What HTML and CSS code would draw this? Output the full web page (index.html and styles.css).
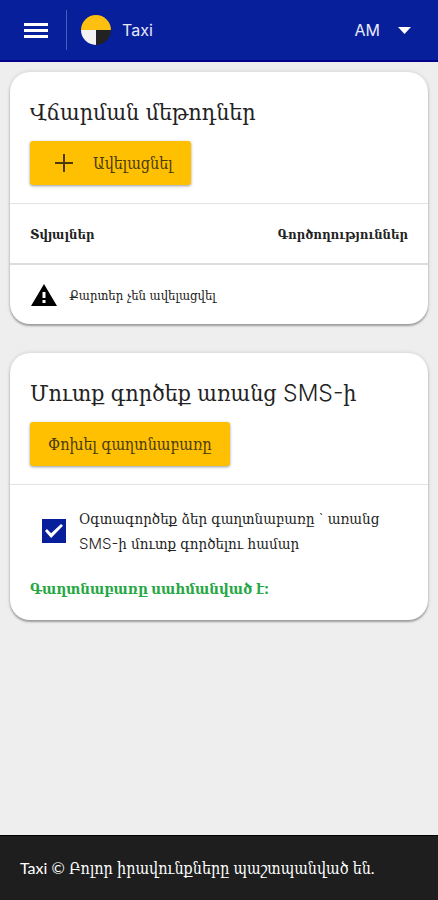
FILE: index.html
```html
<!DOCTYPE html>
<html lang="hy">
<head>
<meta charset="utf-8">
<meta name="viewport" content="width=device-width, initial-scale=1">
<title>Taxi</title>
<link rel="stylesheet" href="styles.css">
</head>
<body>
<header class="topbar">
  <button class="menu" type="button" aria-label="Մենյու">
    <svg width="24" height="18" viewBox="0 0 24 18"><path d="M0 1h24v3H0zM0 7h24v3H0zM0 13h24v3H0z" fill="#fff"/></svg>
  </button>
  <a class="brand" href="#">
    <svg width="30" height="30" viewBox="0 0 30 30"><path d="M0 15a15 15 0 0 1 30 0z" fill="#fdc010"/><path d="M0 15h15v15A15 15 0 0 1 0 15z" fill="#f3f3f3"/><path d="M15 15h15a15 15 0 0 1-15 15z" fill="#222"/></svg>
    <span>Taxi</span>
  </a>
  <button class="language" type="button">
    <span>AM</span>
    <svg width="13" height="7" viewBox="0 0 13 7"><path d="M0 0h13L6.500 7z" fill="#fff"/></svg>
  </button>
</header>
<main class="content">
  <section class="card">
    <div class="card-head">
      <h2>Վճարման մեթոդներ</h2>
      <button class="action action-add" type="button">
        <svg width="18" height="18" viewBox="0 0 18 18"><path d="M8 0h2v8h8v2h-8v8H8v-8H0V8h8z" fill="#4a3b0c"/></svg>
        <span>Ավելացնել</span>
      </button>
    </div>
    <table class="methods">
      <thead>
        <tr><th>Տվյալներ</th><th>Գործողություններ</th></tr>
      </thead>
      <tbody>
        <tr><td colspan="2">
          <div class="empty">
            <svg width="26" height="22" viewBox="0 0 26 22"><path fill-rule="evenodd" d="M13 0l13 22H0zM11.500 8v6h3V8zM11.500 16v3h3v-3z" fill="#000"/></svg>
            <span>Քարտեր չեն ավելացվել</span>
          </div>
        </td></tr>
      </tbody>
    </table>
  </section>
  <section class="card">
    <div class="card-head">
      <h2>Մուտք գործեք առանց SMS-ի</h2>
      <button class="action" type="button">Փոխել գաղտնաբառը</button>
    </div>
    <div class="password">
      <label class="option">
        <input type="checkbox" checked>
        <span>Օգտագործեք ձեր գաղտնաբառը ` առանց SMS-ի մուտք գործելու համար</span>
      </label>
      <p class="status">Գաղտնաբառը սահմանված է:</p>
    </div>
  </section>
</main>
<footer class="footer">Taxi © Բոլոր իրավունքները պաշտպանված են.</footer>
</body>
</html>
```
FILE: styles.css
```css
* { box-sizing: border-box; }
body {
  margin: 0;
  min-height: 100vh;
  display: flex;
  flex-direction: column;
  background: #eee;
  color: #222;
  font-family: Inter, "DejaVu Serif Condensed", "DejaVu Serif", serif;
  font-size: 13px;
  line-height: 20px;
}
button { font: inherit; border: 0; cursor: pointer; }
svg { display: block; flex: none; }
.topbar {
  display: flex;
  align-items: center;
  height: 62px;
  padding: 0 19px 0 16px;
  background: #081f9b;
  border-bottom: 2px solid #00008b;
  color: #e6e9f8;
  font-size: 16px;
}
.menu {
  padding: 12px 18px 10px 8px;
  border-right: 1px solid #4b5cb6;
  background: none;
}
.brand {
  display: flex;
  align-items: center;
  gap: 11px;
  padding-left: 14px;
  color: inherit;
  text-decoration: none;
}
.language {
  display: flex;
  align-items: center;
  gap: 18px;
  margin-left: auto;
  padding: 8px;
  background: none;
  color: inherit;
}
.content {
  display: flex;
  flex-direction: column;
  gap: 29px;
  padding: 10px 10px 32px;
}
.card {
  border-radius: 20px;
  background: #fff;
  box-shadow: 0 2px 2px rgba(0, 0, 0, .3), 0 0 4px rgba(0, 0, 0, .14);
}
.card-head {
  padding: 24px 20px 18px;
  border-bottom: 1px solid #e3e3e3;
}
h2 {
  margin: 0 0 13px;
  font-size: 23px;
  line-height: 32px;
  font-weight: 300;
}
.action {
  display: inline-flex;
  align-items: center;
  gap: 20px;
  height: 44px;
  padding: 0 18px;
  border-radius: 3px;
  background: #ffc001;
  color: #4a3b0c;
  font-size: 16px;
  box-shadow: 0 1px 3px rgba(0, 0, 0, .4);
  vertical-align: top;
}
.action-add { padding-left: 25px; }
.methods { width: 100%; border-collapse: collapse; }
th {
  height: 60px;
  padding: 0 20px;
  border-bottom: 2px solid #ddd;
  text-align: left;
  font-weight: 700;
}
th:last-child { text-align: right; }
td { height: 60px; padding: 0 20px; }
.empty { display: flex; align-items: center; gap: 12px; padding-left: 1px; }
.password { padding: 21px 20px; }
.option {
  display: flex;
  align-items: center;
  gap: 13px;
  padding-left: 12px;
  font-size: 15px;
  font-weight: 300;
  line-height: 25px;
}
.option input {
  appearance: none;
  flex: none;
  width: 24px;
  height: 24px;
  margin: 0;
  background: #081f9b;
  display: grid;
  place-items: center;
}
.option input:checked::before {
  content: "";
  width: 18px;
  height: 14px;
  background: #fff;
  clip-path: polygon(0 50%, 11% 36%, 34% 66%, 89% 0, 100% 13%, 34% 100%);
}
.status {
  margin: 23px 0 0;
  color: #28a745;
  font-size: 15px;
  font-weight: 700;
}
.footer {
  margin-top: auto;
  padding: 22px 20px;
  border-top: 1px solid #000;
  background: #1e1e1e;
  color: #fff;
  font-family: Lato, "DejaVu Serif Condensed", "DejaVu Serif", serif;
  font-size: 16px;
}
```
